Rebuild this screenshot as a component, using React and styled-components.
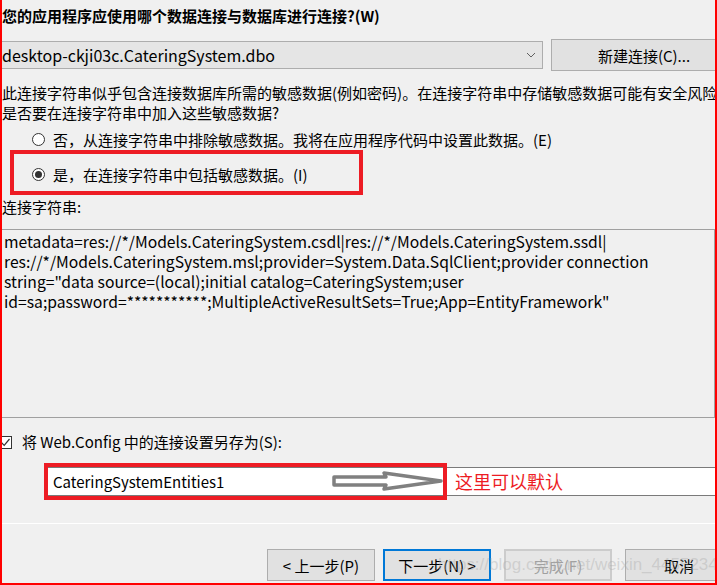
import React from "react";
import styled, { createGlobalStyle } from "styled-components";

const GlobalStyle = createGlobalStyle`
  html, body {
    margin: 0;
    padding: 0;
    background: #f0f0f0;
  }
`;

const Frame = styled.div`
  position: relative;
  width: 717px;
  height: 585px;
  box-sizing: border-box;
  border-left: 2px solid #ff0000;
  border-right: 2px solid #ff0000;
  border-bottom: 2px solid #ff0000;
  background: #f0f0f0;
  overflow: hidden;
  display: flex;
  flex-direction: column;
  padding-top: 6px;
  font-family: "Noto Sans CJK SC", "Noto Sans", sans-serif;
  font-size: 15px;
  color: #000;
  white-space: nowrap;
`;

const Title = styled.div`
  font-weight: 700;
  line-height: 20px;
`;

const ComboRow = styled.div`
  display: flex;
  align-items: center;
  gap: 8px;
  margin-top: 13px;
  height: 32px;
`;

const Combo = styled.div`
  flex: 0 0 541px;
  height: 28px;
  box-sizing: border-box;
  display: flex;
  align-items: center;
  justify-content: space-between;
  padding: 0 6px 0 0;
  background: #e5e5e5;
  border: 1px solid #adadad;
  border-left: none;
  font-size: 16px;
`;

const Button = styled.div`
  flex: 0 0 auto;
  width: ${(p) => p.$width || 108}px;
  height: 32px;
  box-sizing: border-box;
  margin-left: ${(p) => p.$offset || 0}px;
  display: flex;
  align-items: center;
  justify-content: center;
  background: ${(p) => (p.$disabled ? "#e6e6e6" : "#e1e1e1")};
  border: ${(p) =>
    p.$primary ? "2px solid #0078d7" : p.$disabled ? "2px solid #cccccc" : "1px solid #adadad"};
  color: ${(p) => (p.$disabled ? "#a0a0a0" : "#000")};
  font-size: 15px;
`;

const Para = styled.div`
  margin-top: 12px;
  line-height: 20px;
`;

const RadioRow = styled.div`
  display: flex;
  align-items: center;
  gap: 8px;
  height: 22px;
  margin-top: ${(p) => p.$top || 0}px;
  padding-left: ${(p) => p.$indent}px;
`;

const Radio = styled.span`
  position: relative;
  width: 13px;
  height: 13px;
  box-sizing: border-box;
  border-radius: 50%;
  border: 1px solid #333;
  background: #fff;

  &::after {
    content: "";
    display: ${(p) => (p.$checked ? "block" : "none")};
    position: absolute;
    left: 2px;
    top: 2px;
    width: 7px;
    height: 7px;
    border-radius: 50%;
    background: #333;
  }
`;

const Highlight = styled.div`
  margin-left: 8px;
  width: 353px;
  height: 45px;
  box-sizing: border-box;
  border: 4px solid #ed1c24;
  padding-top: 9px;
`;

const Label = styled.div`
  margin-top: 2px;
  line-height: 20px;
`;

const StringBox = styled.div`
  margin-top: 12px;
  height: 189px;
  box-sizing: border-box;
  border-top: 1px solid #a0a0a0;
  border-bottom: 1px solid #a0a0a0;
  border-right: 1px solid #a0a0a0;
  padding: 2px 0 0 2px;
  line-height: 20px;
  font-size: 15.7px;
`;

const CheckRow = styled.div`
  margin-top: 14px;
  display: flex;
  align-items: center;
  gap: 10px;
  line-height: 20px;
`;

const CheckBox = styled.span`
  margin-left: -3px;
  width: 13px;
  height: 13px;
  box-sizing: border-box;
  border: 1px solid #333;
  background: #fff;
  display: flex;
  align-items: center;
  justify-content: center;
`;

const InputRow = styled.div`
  position: relative;
  margin-top: 11px;
  height: 37px;
  display: flex;
  align-items: center;
  padding-left: 45px;
`;

const Field = styled.div`
  flex: 1;
  height: 29px;
  box-sizing: border-box;
  border: 1px solid #7a7a7a;
  border-right: none;
  background: #fff;
  display: flex;
  align-items: center;
  padding-left: 5px;
  font-size: 15px;
`;

const Mark = styled.div`
  position: absolute;
  left: 42px;
  top: 0;
  width: 403px;
  height: 37px;
  box-sizing: border-box;
  border: 4px solid #ed1c24;
`;

const Arrow = styled.svg`
  position: absolute;
  left: 328px;
  top: 6px;
`;

const Note = styled.span`
  position: absolute;
  left: 453px;
  top: 7px;
  color: #ed1c24;
  font-size: 18px;
  line-height: 22px;
`;

const Divider = styled.div`
  margin-top: 23px;
  height: 1px;
  background: #ffffff;
`;

const ButtonRow = styled.div`
  display: flex;
  margin-top: 25px;
  padding-left: 265px;
`;

const Watermark = styled.div`
  position: absolute;
  left: 436px;
  top: 555px;
  font-family: "Liberation Sans", Arial, sans-serif;
  font-size: 17px;
  color: rgba(170, 170, 170, 0.4);
  pointer-events: none;
`;

const lines = [
  "metadata=res://*/Models.CateringSystem.csdl|res://*/Models.CateringSystem.ssdl|",
  "res://*/Models.CateringSystem.msl;provider=System.Data.SqlClient;provider connection",
  'string="data source=(local);initial catalog=CateringSystem;user',
  'id=sa;password=***********;MultipleActiveResultSets=True;App=EntityFramework"',
];

export default function App() {
  return (
    <Frame>
      <GlobalStyle />
      <Title>您的应用程序应使用哪个数据连接与数据库进行连接?(W)</Title>
      <ComboRow>
        <Combo>
          <span>desktop-ckji03c.CateringSystem.dbo</span>
          <svg width="10" height="6" viewBox="0 0 10 6">
            <path d="M1 1 L5 5 L9 1" fill="none" stroke="#606060" strokeWidth="1" />
          </svg>
        </Combo>
        <Button $width={186}>新建连接(C)...</Button>
      </ComboRow>
      <Para>
        此连接字符串似乎包含连接数据库所需的敏感数据(例如密码)。在连接字符串中存储敏感数据可能有安全风险
        <br />
        是否要在连接字符串中加入这些敏感数据?
      </Para>
      <RadioRow $indent={30} $top={5}>
        <Radio />
        <span>否，从连接字符串中排除敏感数据。我将在应用程序代码中设置此数据。(E)</span>
      </RadioRow>
      <Highlight>
        <RadioRow $indent={18}>
          <Radio $checked />
          <span>是，在连接字符串中包括敏感数据。(I)</span>
        </RadioRow>
      </Highlight>
      <Label>连接字符串:</Label>
      <StringBox>
        {lines.map((l) => (
          <div key={l}>{l}</div>
        ))}
      </StringBox>
      <CheckRow>
        <CheckBox>
          <svg width="11" height="11" viewBox="0 0 11 11">
            <path d="M1.5 5.5 L4.2 8.3 L9.5 2" fill="none" stroke="#333" strokeWidth="1.2" />
          </svg>
        </CheckBox>
        <span>将 Web.Config 中的连接设置另存为(S):</span>
      </CheckRow>
      <InputRow>
        <Field>CateringSystemEntities1</Field>
        <Mark />
        <Arrow width="116" height="24" viewBox="0 0 116 24">
          <path
            d="M4 8 L56 8 L54 4 L111 12 L54 20 L56 16 L4 16 Z"
            fill="#fff"
            stroke="#808080"
            strokeWidth="3.5"
            strokeLinejoin="round"
          />
        </Arrow>
        <Note>这里可以默认</Note>
      </InputRow>
      <Divider />
      <ButtonRow>
        <Button>&lt; 上一步(P)</Button>
        <Button $primary $offset={8}>下一步(N) &gt;</Button>
        <Button $disabled $offset={13}>完成(F)</Button>
        <Button $offset={13}>取消</Button>
      </ButtonRow>
      <Watermark>https://blog.csdn.net/weixin_44552343</Watermark>
    </Frame>
  );
}
